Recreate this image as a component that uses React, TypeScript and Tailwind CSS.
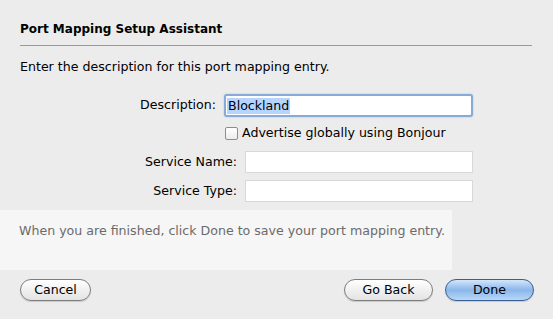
import React from "react";

const font = { fontFamily: '"Lucida Grande", "DejaVu Sans", sans-serif' };

function AquaButton({ label, primary, width }: { label: string; primary?: boolean; width: string }) {
  return (
    <div
      className={`${width} h-[22px] rounded-full border flex items-center justify-center text-[12.6px] text-black ${
        primary
          ? "border-[#3a5f95] bg-gradient-to-b from-[#d3e6fb] via-[#8ab6ea] to-[#b9d7f7]"
          : "border-[#7d7d7d] bg-gradient-to-b from-[#ffffff] via-[#f0f0f0] to-[#e4e4e4]"
      } shadow-[0_1px_1px_rgba(0,0,0,0.15)]`}
    >
      {label}
    </div>
  );
}

export default function App() {
  return (
    <div className="w-[553px] h-[319px] bg-[#ececec] relative overflow-hidden text-black" style={font}>
      <div className="pl-[20px] pr-[21px] pt-[21px]">
        <div className="text-[12px] font-bold leading-[16px]">Port Mapping Setup Assistant</div>
        <div className="mt-[8px] h-px bg-[#9a9a9a]" />
        <div className="mt-[13px] text-[12.6px] leading-[16px]">Enter the description for this port mapping entry.</div>
      </div>

      <div className="mt-[19px] flex flex-col text-[12.6px]">
        <div className="flex items-center h-[23px]">
          <div className="w-[217px] text-right pr-[1px]">Description:</div>
          <div className="ml-[7px] w-[249px] h-[23px] rounded-[3px] border-[2px] border-[#89aad6] shadow-[0_0_2px_#9cbde8] bg-white flex items-center">
            <span className="ml-[1px] px-[1px] bg-[#b5d5ff] leading-[16px]">Blockland</span>
          </div>
        </div>
        <div className="flex items-center mt-[9px] h-[15px]">
          <div className="ml-[225px] w-[13px] h-[13px] border border-[#8d8d8d] bg-gradient-to-b from-white to-[#ececec] rounded-[2px]" />
          <div className="ml-[4px]">Advertise globally using Bonjour</div>
        </div>
        <div className="flex items-center mt-[10px] h-[22px]">
          <div className="w-[237px] text-right">Service Name:</div>
          <div className="ml-[8px] w-[228px] h-[22px] bg-white border border-[#d8d8d8]" />
        </div>
        <div className="flex items-center mt-[7px] h-[22px]">
          <div className="w-[237px] text-right">Service Type:</div>
          <div className="ml-[8px] w-[228px] h-[22px] bg-white border border-[#d8d8d8]" />
        </div>
      </div>

      <div className="mt-[8px] w-[452px] h-[60px] bg-[#f6f6f6] pl-[19px] pt-[13px]">
        <div className="text-[12.6px] text-[#6b6b6b] leading-[16px] whitespace-nowrap">
          When you are finished, click Done to save your port mapping entry.
        </div>
      </div>

      <div className="mt-[9px] flex items-center pl-[20px] pr-[19px]">
        <AquaButton label="Cancel" width="w-[71px]" />
        <div className="flex-1" />
        <AquaButton label="Go Back" width="w-[89px]" />
        <div className="w-[12px]" />
        <AquaButton label="Done" primary width="w-[89px]" />
      </div>
    </div>
  );
}
